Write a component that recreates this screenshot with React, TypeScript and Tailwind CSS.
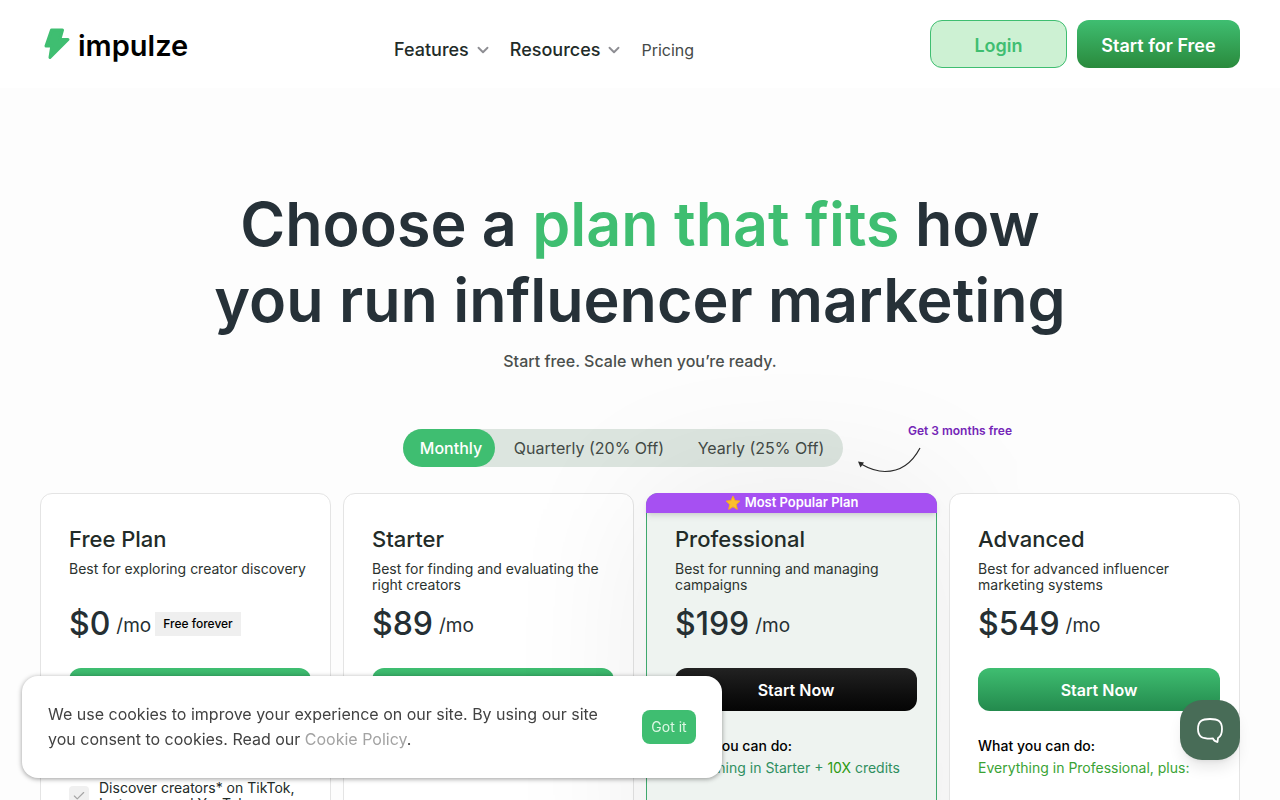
import React from 'react';
import { ChevronDown, Check } from 'lucide-react';
import clsx from 'clsx';

interface Plan {
  name: string;
  summary: string;
  price: string;
  tag?: string;
  cta: string;
  popular?: boolean;
  intro: React.ReactNode;
  features: string[];
}

const PLANS: Plan[] = [
  {
    name: 'Free Plan',
    summary: 'Best for exploring creator discovery',
    price: '$0',
    tag: 'Free forever',
    cta: 'Start for Free',
    intro: null,
    features: ['Discover creators* on TikTok, Instagram and YouTube'],
  },
  {
    name: 'Starter',
    summary: 'Best for finding and evaluating the right creators',
    price: '$89',
    cta: 'Start Now',
    intro: null,
    features: [],
  },
  {
    name: 'Professional',
    summary: 'Best for running and managing campaigns',
    price: '$199',
    cta: 'Start Now',
    popular: true,
    intro: (
      <>
        Everything in Starter + <span className="text-[#2c9a12]">10X</span> credits
      </>
    ),
    features: [],
  },
  {
    name: 'Advanced',
    summary: 'Best for advanced influencer marketing systems',
    price: '$549',
    cta: 'Start Now',
    intro: 'Everything in Professional, plus:',
    features: [],
  },
];

const Logo = () => (
  <a href="#" className="flex items-center gap-2">
    <svg width="26" height="32" viewBox="0 0 26 32" fill="#3fbe71" stroke="#3fbe71" strokeWidth="3" strokeLinejoin="round">
      <path d="M7.5 2H18.500L15.800 11.500H24L6 29.500L7.800 18H2Z" />
    </svg>
    <span className="pt-1 text-[29px] leading-9 font-semibold text-black">impulze</span>
  </a>
);

const Star = () => (
  <svg width="16" height="16" viewBox="0 0 16 16">
    <path
      d="M8 1.2 10 5.6 14.8 6.1 11.2 9.4 12.3 14.3 8 11.8 3.7 14.3 4.8 9.4 1.2 6.1 6 5.6Z"
      fill="#fcbf2d"
      stroke="#f5ae1d"
      strokeLinejoin="round"
    />
  </svg>
);

const Header = () => (
  <header className="bg-white h-[88px] px-10 flex items-center justify-between">
    <div className="w-[354px] pl-1">
      <Logo />
    </div>
    <nav className="flex-1 flex items-center gap-[18px] pt-3 text-[#222b28]">
      <button className="flex items-center gap-[5px] text-lg font-medium">
        Features <ChevronDown className="size-[18px] text-[#8e8e93]" strokeWidth={2.5} />
      </button>
      <button className="flex items-center gap-[5px] text-lg font-medium">
        Resources <ChevronDown className="size-[18px] text-[#8e8e93]" strokeWidth={2.5} />
      </button>
      <a href="#" className="text-base text-[#454a48]">Pricing</a>
    </nav>
    <div className="flex gap-[10px]">
      <a
        href="#"
        className="w-[137px] h-12 pt-1 rounded-xl border border-[#3fbe71] bg-[#cdf1d3] text-[#3fbe71] text-lg font-semibold flex items-center justify-center"
      >
        Login
      </a>
      <a
        href="#"
        className="w-[163px] h-12 pt-1 rounded-xl bg-linear-to-b from-[#3fbe71] to-[#2a8a3c] text-white text-lg font-semibold flex items-center justify-center"
      >
        Start for Free
      </a>
    </div>
  </header>
);

const BillingToggle = () => (
  <div className="relative flex justify-center pr-[34px]">
    <div className="flex rounded-full bg-[#dce5df] text-[#434a46] text-base">
      <button className="h-[38px] w-[92px] pl-1 rounded-full bg-[#3fbe71] text-white font-medium">Monthly</button>
      <button className="w-[188px]">Quarterly (20% Off)</button>
      <button className="w-[160px] pr-1">Yearly (25% Off)</button>
    </div>
    {/* callout beside the yearly tab */}
    <div className="absolute left-1/2 -top-2 ml-[216px] w-[160px]">
      <p className="text-right pr-1 text-xs leading-5 font-semibold text-[#7526b8]">Get 3 months free</p>
      <svg width="70" height="32" viewBox="0 0 70 32" fill="none" className="block">
        <path d="M64 7C55 24 43 30.500 29 30.500C19 30.500 12 27 5 23" stroke="#2b2b2b" strokeWidth="1.2" />
        <path d="M2 20.5 8 21.5 4.5 26.5Z" fill="#2b2b2b" />
      </svg>
    </div>
  </div>
);

const PlanCard = ({ plan }: { plan: Plan }) => (
  <article
    className={clsx(
      'relative rounded-xl border pl-7 pr-[19px] pt-[31px] pb-10 min-h-[420px]',
      plan.popular && 'border-[#3fa86d] bg-[#eef3f0] shadow-[0_0_150px_rgba(0,0,0,0.08)]',
      !plan.popular && 'border-[#e4e4e4] bg-white',
    )}
  >
    {plan.popular && (
      <div className="absolute -inset-x-px -top-px h-5 rounded-t-xl bg-[#a650f2] text-white text-[13px] font-semibold flex items-center justify-center gap-1 shadow-md">
        <Star />
        Most Popular Plan
      </div>
    )}
    <h2 className="text-[22px] leading-7 font-medium text-[#222b28]">{plan.name}</h2>
    <p className="mt-2 h-9 text-sm leading-4 text-[#2c332f]">{plan.summary}</p>
    <div className="mt-[7px] flex items-center h-10 text-[#252f33]">
      <span className="text-[32px] leading-10 font-medium">{plan.price}</span>
      <span className="ml-[6px] pt-1 text-[19px]">/mo</span>
      {plan.tag && <span className="ml-1 bg-[#efefef] px-2 py-1 text-xs font-medium text-black">{plan.tag}</span>}
    </div>
    <button
      className={clsx(
        'mt-6 w-full h-[43px] rounded-xl text-white text-base font-semibold bg-linear-to-b',
        plan.popular ? 'from-[#222222] to-[#050505]' : 'from-[#3fbe71] to-[#238a4d]',
      )}
    >
      {plan.cta}
    </button>
    <div className="mt-[25px] h-10">
      {plan.intro && (
        <>
          <p className="text-sm leading-5 font-medium text-black">What you can do:</p>
          <p className={clsx('mt-1 text-sm leading-4', plan.popular ? 'text-[#2f8f60]' : 'text-[#3aa335]')}>
            {plan.intro}
          </p>
        </>
      )}
    </div>
    <ul className="mt-1">
      {plan.features.map((feature) => (
        <li key={feature} className="flex items-center gap-[10px] text-sm leading-4 text-[#222b28]">
          <span className="size-5 shrink-0 bg-[#f0f0f0] rounded-sm flex items-center justify-center text-[#a5a5a5]">
            <Check className="size-3.5" />
          </span>
          {feature}
        </li>
      ))}
    </ul>
  </article>
);

const CookieBanner = () => (
  <div className="fixed left-[22px] bottom-[22px] w-[700px] rounded-2xl bg-white px-[26px] py-[26px] flex items-center justify-between shadow-[0_1px_5px_rgba(0,0,0,0.4)]">
    <p className="w-[570px] text-base leading-[25px] text-[#424242]">
      We use cookies to improve your experience on our site. By using our site you consent to cookies. Read our{' '}
      <a href="#" className="text-[#a3a3a3]">Cookie Policy</a>.
    </p>
    <button className="h-[34px] w-[54px] rounded-lg bg-[#3fbe71] text-[#ddf7e4] text-sm">Got it</button>
  </div>
);

const ChatButton = () => (
  <button
    aria-label="Open chat"
    className="fixed right-10 bottom-10 size-[60px] rounded-[22px] bg-[#486c57] flex items-center justify-center shadow-lg"
  >
    <svg width="28" height="28" viewBox="0 0 28 28" fill="none" stroke="#fff" strokeWidth="1.8" strokeLinejoin="round">
      <path d="M14 3C22 3 26 5 26 13C26 18 25 20.500 22 22L21.500 26C19 25.500 17.500 24 17 22.500C6 23 2 21 2 13C2 5 6 3 14 3Z" />
    </svg>
  </button>
);

export default function App() {
  return (
    <div className="min-h-screen bg-[#fdfdfd] font-['Inter',sans-serif]">
      <Header />
      <main>
        <section className="pt-[98px] text-center">
          <h1 className="text-[61px] leading-[76px] font-semibold text-[#263138]">
            Choose a <span className="text-[#3fbe71]">plan that fits</span> how
            <br />
            you run influencer marketing
          </h1>
          <p className="mt-[11px] text-base leading-6 font-medium text-[#4a4f4c]">Start free. Scale when you’re ready.</p>
        </section>
        <section className="mt-14">
          <BillingToggle />
          <div className="mt-[26px] px-10 grid grid-cols-4 gap-3">
            {PLANS.map((plan) => (
              <PlanCard key={plan.name} plan={plan} />
            ))}
          </div>
        </section>
      </main>
      <CookieBanner />
      <ChatButton />
    </div>
  );
}
